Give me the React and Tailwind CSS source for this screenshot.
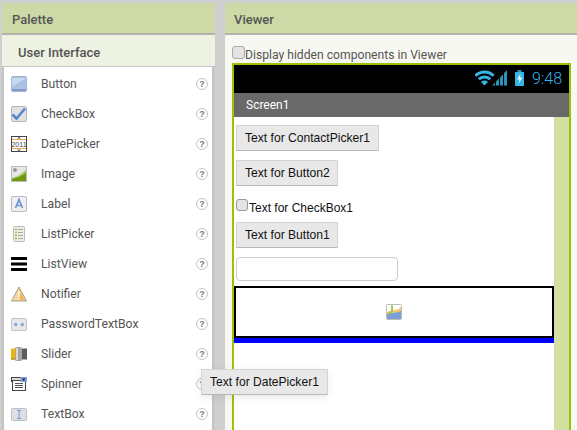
import React from 'react';

const ButtonIcon = () => (
  <svg width="16" height="16" viewBox="0 0 16 16">
    <rect x="0.5" y="0.5" width="15" height="15" rx="1.5" fill="#a9c2e6" stroke="#a5b4cc" />
    <path d="M1 2h14l-13 8H1z" fill="#c9d9f0" />
    <rect x="1" y="13" width="14" height="2" fill="#7f9cc8" />
  </svg>
);

const CheckIcon = () => (
  <svg width="16" height="16" viewBox="0 0 16 16">
    <rect x="0.5" y="0.5" width="15" height="15" rx="1.5" fill="#e2e2e2" stroke="#b5b5b5" />
    <path d="M1.5 8.500l4 4 8.500-10" fill="none" stroke="#5a86cf" strokeWidth="2.6" />
  </svg>
);

const DateIcon = () => (
  <svg width="16" height="16" viewBox="0 0 16 16">
    <rect x="0.5" y="0.5" width="15" height="15" fill="#fff" stroke="#444" />
    <path d="M1 3.500h14M1 12.500h14" stroke="#f0a940" />
    <path d="M6 2.500h4L8 0.5zM6 13.500h4L8 15.500z" fill="#666" />
    <text x="8" y="10.500" textAnchor="middle" fontFamily="Liberation Sans, sans-serif" fontSize="7" fill="#444">2011</text>
  </svg>
);

const ImageIcon = () => (
  <svg width="16" height="16" viewBox="0 0 16 16">
    <rect x="0.5" y="0.5" width="15" height="15" fill="#e6e6e6" stroke="#bbb" />
    <circle cx="4" cy="4" r="2" fill="#999" />
    <path d="M1 12l6-2 8-6v11H1z" fill="#a8c65a" />
    <path d="M1 15v-2l7-2 7-4v8z" fill="#6f9a10" />
  </svg>
);

const LabelIcon = () => (
  <svg width="16" height="16" viewBox="0 0 16 16">
    <rect x="0.5" y="0.5" width="15" height="15" rx="1.5" fill="#f0f0f2" stroke="#bbb" />
    <path d="M4.500 12L8 3.500 11.500 12M5.800 9.500h4.400" fill="none" stroke="#6e94d2" strokeWidth="1.7" />
  </svg>
);

const ListPickerIcon = () => (
  <svg width="16" height="16" viewBox="0 0 16 16">
    <rect x="2.500" y="0.5" width="11" height="15" rx="1" fill="#eceee4" stroke="#bbb" />
    <path d="M4 3.500h2M4 6.500h2M4 9.500h2M4 12.500h2" stroke="#a6bf45" strokeWidth="1.6" />
    <path d="M7 3.500h5M7 6.500h5M7 9.500h5M7 12.500h5" stroke="#aaa" strokeWidth="1.2" />
  </svg>
);

const ListViewIcon = () => (
  <svg width="16" height="14" viewBox="0 0 16 14">
    <rect y="0" width="16" height="3" fill="#000" />
    <rect y="5.500" width="16" height="3" fill="#000" />
    <rect y="11" width="16" height="3" fill="#000" />
  </svg>
);

const NotifierIcon = () => (
  <svg width="16" height="16" viewBox="0 0 16 16">
    <path d="M8 1l7.500 14H0.500z" fill="#f3d7a0" stroke="#a8a08a" />
    <path d="M8 2.500l6 11.500H8z" fill="#f2b660" />
    <rect x="7.200" y="5" width="1.600" height="6" fill="#fff6e0" />
    <rect x="7.200" y="12" width="1.600" height="1.600" fill="#fff6e0" />
  </svg>
);

const PasswordIcon = () => (
  <svg width="16" height="13" viewBox="0 0 16 13">
    <rect x="0.5" y="0.5" width="15" height="12" rx="1.5" fill="#e8e8ea" stroke="#c4c4c4" />
    <path d="M3 6.500h3.500M4.750 4.700v3.600M3.500 5l2.500 3M6 5l-2.500 3M9.500 6.500H13M11.250 4.700v3.600M10 5l2.500 3M12.500 5L10 8" stroke="#7a9cd6" strokeWidth="0.8" />
  </svg>
);

const SliderIcon = () => (
  <svg width="16" height="14" viewBox="0 0 16 14">
    <rect y="1.500" width="5" height="11" fill="#f2b600" />
    <rect y="11.500" width="5" height="1" fill="#99802a" />
    <rect x="4" y="0" width="7" height="14" rx="1.5" fill="#a5a5a5" />
    <rect x="5" y="1" width="2" height="12" fill="#d8d8d8" />
    <rect x="11" y="1.500" width="5" height="11" fill="#5c5c5c" />
  </svg>
);

const SpinnerIcon = () => (
  <svg width="16" height="14" viewBox="0 0 16 14">
    <rect x="0.5" y="0.5" width="15" height="4" fill="#ddd" stroke="#444" />
    <rect x="1.500" y="3.500" width="13" height="10" fill="#fff" stroke="#444" />
    <path d="M4 6.500h8M4 8.500h8M4 10.500h8" stroke="#555" />
    <rect x="9.500" y="0" width="6.500" height="5" fill="#7f9fd8" />
    <path d="M11 1.500h3.500L12.700 4z" fill="#222" />
  </svg>
);

const TextBoxIcon = () => (
  <svg width="16" height="13" viewBox="0 0 16 13">
    <rect x="0.5" y="0.5" width="15" height="12" rx="1" fill="#dedfe6" stroke="#c0c0c0" />
    <path d="M6 2.500h4M6 10.500h4M8 2.500v8" fill="none" stroke="#7d96c8" />
  </svg>
);

const HelpIcon = () => (
  <div className="w-[12px] h-[12px] rounded-full border-[1.5px] border-[#c4c4c4] bg-white flex items-center justify-center font-['Liberation_Sans',sans-serif] font-bold text-[9px] leading-none text-[#777]">
    ?
  </div>
);

const paletteItems = [
  ['Button', ButtonIcon],
  ['CheckBox', CheckIcon],
  ['DatePicker', DateIcon],
  ['Image', ImageIcon],
  ['Label', LabelIcon],
  ['ListPicker', ListPickerIcon],
  ['ListView', ListViewIcon],
  ['Notifier', NotifierIcon],
  ['PasswordTextBox', PasswordIcon],
  ['Slider', SliderIcon],
  ['Spinner', SpinnerIcon],
  ['TextBox', TextBoxIcon],
];

const FakeButton = ({ children, className = '' }) => (
  <div className={`h-[26px] px-[8px] flex items-center bg-[#e8e8e8] border border-[#d4d4d4] border-b-[#b8b8b8] font-['Liberation_Sans',sans-serif] text-[12.1px] text-[#111] whitespace-nowrap ${className}`}>
    {children}
  </div>
);

const StatusIcons = () => (
  <svg width="50" height="16" viewBox="0 0 50 16" className="mb-[3px]">
    <path d="M0.300 5.800a13 13 0 0 1 18.400 0M3.800 9.300a8 8 0 0 1 11.400 0" fill="none" stroke="#33b5e5" strokeWidth="3" />
    <path d="M9.500 15.500L6 12a5 5 0 0 1 7 0z" fill="#33b5e5" />
    <path d="M17 15.500l3-3v3zM21 15.500v-4l3-3v7zM25 15.500v-8l3-3v11zM29 15.500V3l3-3v15.500z" fill="#2a93bb" />
    <rect x="40" y="2" width="9" height="14" fill="#33b5e5" />
    <rect x="42.500" y="0" width="4" height="2" fill="#2a93bb" />
    <path d="M45.500 3.500l-3.500 6h2.500l-1 4.500 4-6.500h-2.500z" fill="#e8f8ff" />
  </svg>
);

const App = () => {
  return (
    <div className="relative w-[577px] h-[430px] overflow-hidden flex pt-[3px] pl-[2px] bg-[#eeeeee] bg-[radial-gradient(#cfcfcf_1px,transparent_1px)] bg-[length:2px_2px] font-['Roboto',sans-serif]">
      {/* palette */}
      <div className="w-[213px] shrink-0 flex flex-col">
        <div className="h-[32px] shrink-0 bg-[#cddaa7] border-b-2 border-[#b4b4ae] pl-[10px] pt-[4px] flex items-center font-medium text-[13px] text-[#555]">
          Palette
        </div>
        <div className="h-[32px] shrink-0 bg-[#eef2e3] border-b border-[#c4c4c4] pl-[16px] pt-[4px] flex items-center font-medium text-[13px] text-[#555]">
          User Interface
        </div>
        <div className="flex-1 mr-[1px] bg-white border-l-2 border-r-2 border-[#c4c4c4] pt-[2px] pl-[7px] pr-[4px]">
          {paletteItems.map(([name, Icon]) => (
            <div key={name} className="h-[30px] flex items-center">
              <div className="w-[16px] h-[16px] flex items-center justify-center">
                <Icon />
              </div>
              <span className="ml-[14px] flex-1 text-[12.2px] text-[#555]">{name}</span>
              <HelpIcon />
            </div>
          ))}
        </div>
      </div>

      {/* viewer */}
      <div className="ml-[10px] flex-1 flex flex-col bg-[#f7f8f2]">
        <div className="h-[32px] shrink-0 bg-[#cddaa7] border-b-2 border-[#b4b4ae] pl-[9px] pt-[4px] flex items-center font-medium text-[13px] text-[#555]">
          Viewer
        </div>
        <div className="flex items-start h-[14px] mt-[11px] ml-[7px]">
          <div className="w-[13px] h-[13px] rounded-[3px] border border-[#aaa] bg-[#e4e4e4]" />
          <span className="text-[12.15px] leading-[18px] text-[#555] whitespace-nowrap">Display hidden components in Viewer</span>
        </div>
        <div className="ml-[7px] mr-[6px] mt-[3px] flex-1 border-2 border-b-0 border-[#99c400] flex flex-col">
          <div className="h-[28px] shrink-0 bg-black flex items-center justify-end pr-[7px]">
            <StatusIcons />
            <span className="ml-[7px] text-[16px] font-light text-[#33b5e5]">9:48</span>
          </div>
          <div className="h-[24px] shrink-0 bg-[#696969] pl-[12px] flex items-center text-[12px] text-white">
            Screen1
          </div>
          <div className="flex-1 flex">
            <div className="w-[320px] shrink-0 bg-white flex flex-col items-start">
              <FakeButton className="ml-[2px] mt-[8px]">Text for ContactPicker1</FakeButton>
              <FakeButton className="ml-[2px] mt-[9px] w-[102px]">Text for Button2</FakeButton>
              <div className="ml-[2px] mt-[13px] h-[14px] flex items-start">
                <div className="w-[12px] h-[12px] rounded-[3px] border border-[#999] bg-[#e4e4e4]" />
                <span className="ml-[1px] font-['Liberation_Sans',sans-serif] text-[12px] leading-[14px] text-[#111] whitespace-nowrap relative top-[2px]">Text for CheckBox1</span>
              </div>
              <FakeButton className="ml-[2px] mt-[9px] w-[102px]">Text for Button1</FakeButton>
              <div className="ml-[2px] mt-[9px] w-[162px] h-[24px] bg-white border border-[#ccc] rounded-[4px]" />
              <div className="mt-[5px] w-full h-[52px] border-2 border-black flex items-center justify-center">
                <svg width="16" height="16" viewBox="0 0 16 16">
                  <rect x="0.5" y="0.5" width="15" height="15" rx="1" fill="#fff" stroke="#bbb" />
                  <path d="M1 10c4-3 9 0 14-4v9H1z" fill="#7c9fd4" />
                  <path d="M1 8c5-3 9 0 14-5v4c-5 3-9 0-14 3z" fill="#f5c46c" />
                  <path d="M6 1.500v6c0 2-3 2-3 .5" fill="none" stroke="#a6c84a" strokeWidth="2" />
                </svg>
              </div>
              <div className="w-full h-[5px] bg-[#0000ff]" />
            </div>
            <div className="flex-1 bg-[#d2e0a2]" />
          </div>
        </div>
      </div>

      {/* button being dragged over the palette */}
      <FakeButton className="absolute left-[201px] top-[369px] w-[127px] shadow-[0_3px_8px_rgba(0,0,0,0.08)]">Text for DatePicker1</FakeButton>
    </div>
  );
};

export default App;
